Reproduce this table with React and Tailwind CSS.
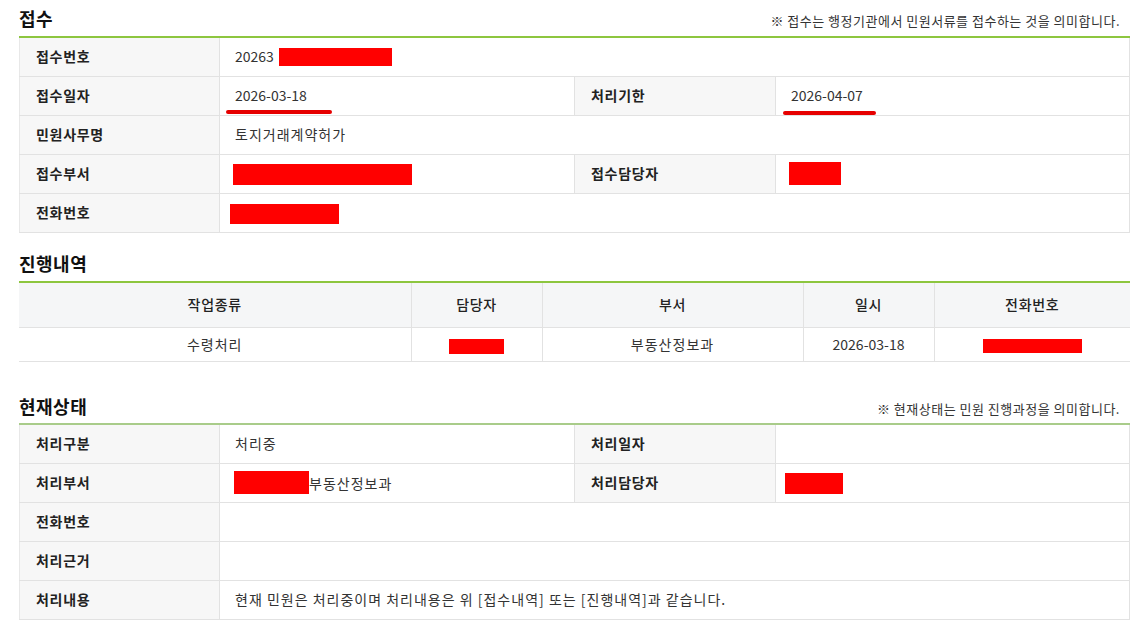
const FONT = "font-['Noto_Sans_CJK_KR','Noto_Sans',sans-serif]";

const Redact = ({ className }) => <span className={`inline-block bg-[#ff0000] align-middle ${className}`} />;

const Underlined = ({ children, lineClass }) => (
  <span className="relative inline-block">
    {children}
    <span className={`absolute h-[4px] rounded-full bg-[#e60000] ${lineClass}`} />
  </span>
);

const SectionHeader = ({ title, note, className }) => (
  <div className={`flex items-center justify-between ${className}`}>
    <h2 className="text-[18px] font-bold tracking-[0.5px] text-[#111]">{title}</h2>
    {note ? <p className="pr-[10px] pt-[6px] text-[13px] tracking-[0.5px] text-[#333]">{note}</p> : null}
  </div>
);

const Th = ({ children }) => (
  <th className="h-[39px] w-[200px] border-b border-r border-[#e2e2e2] bg-[#f7f7f7] pl-[16px] text-left text-[14px] font-bold tracking-[0.7px] text-[#222]">
    {children}
  </th>
);

const Td = ({ children, colSpan }) => (
  <td colSpan={colSpan} className="h-[39px] border-b border-r border-[#e2e2e2] pl-[15px] text-[14px] text-[#333]">
    {children}
  </td>
);

const Ko = ({ children }) => <span className="tracking-[1px]">{children}</span>;

export default function App() {
  return (
    <div className={`${FONT} min-h-[629px] bg-white px-[19px] pr-[11px]`}>
      <SectionHeader title="접수" note="※ 접수는 행정기관에서 민원서류를 접수하는 것을 의미합니다." className="h-[36px]" />
      <table className="w-full table-fixed border-collapse border-t-2 border-l border-t-[#8dc63f] border-l-[#e8e8e8]">
        <colgroup>
          <col className="w-[200px]" />
          <col className="w-[355px]" />
          <col className="w-[201px]" />
          <col />
        </colgroup>
        <tbody>
          <tr>
            <Th>접수번호</Th>
            <Td colSpan={3}>
              20263<Redact className="-mt-[2px] ml-[5px] h-[18px] w-[113px]" />
            </Td>
          </tr>
          <tr>
            <Th>접수일자</Th>
            <Td>
              <Underlined lineClass="left-[-9px] top-[25px] w-[106px]">2026-03-18</Underlined>
            </Td>
            <Th>처리기한</Th>
            <Td>
              <Underlined lineClass="left-[-8px] top-[26px] w-[93px]">2026-04-07</Underlined>
            </Td>
          </tr>
          <tr>
            <Th>민원사무명</Th>
            <Td colSpan={3}>
              <Ko>토지거래계약허가</Ko>
            </Td>
          </tr>
          <tr>
            <Th>접수부서</Th>
            <Td>
              <Redact className="-ml-[2px] h-[21px] w-[179px]" />
            </Td>
            <Th>접수담당자</Th>
            <Td>
              <Redact className="ml-[-2px] h-[23px] w-[52px]" />
            </Td>
          </tr>
          <tr>
            <Th>전화번호</Th>
            <Td colSpan={3}>
              <Redact className="-ml-[5px] h-[20px] w-[109px]" />
            </Td>
          </tr>
        </tbody>
      </table>

      <SectionHeader title="진행내역" className="mt-[13px] h-[35px]" />
      <table className="w-full table-fixed border-collapse border-t-2 border-t-[#8dc63f] text-center text-[14px]">
        <colgroup>
          <col className="w-[392px]" />
          <col className="w-[131px]" />
          <col className="w-[261px]" />
          <col className="w-[131px]" />
          <col />
        </colgroup>
        <thead>
          <tr className="bg-[#f5f6f7]">
            {["작업종류", "담당자", "부서", "일시", "전화번호"].map((h, i) => (
              <th
                key={h}
                className={`h-[46px] border-b border-[#e2e2e2] font-medium tracking-[0.7px] text-[#222] ${i < 4 ? "border-r" : ""}`}
              >
                {h}
              </th>
            ))}
          </tr>
        </thead>
        <tbody className="text-[#333]">
          <tr>
            <td className="h-[34px] border-b border-r border-[#e2e2e2]">
              <Ko>수령처리</Ko>
            </td>
            <td className="border-b border-r border-[#e2e2e2]">
              <Redact className="h-[15px] w-[55px]" />
            </td>
            <td className="border-b border-r border-[#e2e2e2]">
              <Ko>부동산정보과</Ko>
            </td>
            <td className="border-b border-r border-[#e2e2e2]">2026-03-18</td>
            <td className="border-b border-[#e2e2e2]">
              <Redact className="h-[14px] w-[99px]" />
            </td>
          </tr>
        </tbody>
      </table>

      <SectionHeader title="현재상태" note="※ 현재상태는 민원 진행과정을 의미합니다." className="mt-[27px] h-[34px]" />
      <table className="w-full table-fixed border-collapse border-t-2 border-l border-t-[#a9cc8a] border-l-[#e8e8e8]">
        <colgroup>
          <col className="w-[200px]" />
          <col className="w-[355px]" />
          <col className="w-[201px]" />
          <col />
        </colgroup>
        <tbody>
          <tr>
            <Th>처리구분</Th>
            <Td>
              <Ko>처리중</Ko>
            </Td>
            <Th>처리일자</Th>
            <Td />
          </tr>
          <tr>
            <Th>처리부서</Th>
            <Td>
              <Redact className="-ml-[1px] h-[23px] w-[75px]" />
              <span className="align-middle tracking-[1px]">부동산정보과</span>
            </Td>
            <Th>처리담당자</Th>
            <Td>
              <Redact className="-ml-[6px] h-[21px] w-[58px]" />
            </Td>
          </tr>
          <tr>
            <Th>전화번호</Th>
            <Td colSpan={3} />
          </tr>
          <tr>
            <Th>처리근거</Th>
            <Td colSpan={3} />
          </tr>
          <tr>
            <Th>처리내용</Th>
            <Td colSpan={3}>
              <Ko>현재 민원은 처리중이며 처리내용은 위 [접수내역] 또는 [진행내역]과 같습니다.</Ko>
            </Td>
          </tr>
        </tbody>
      </table>
    </div>
  );
}
